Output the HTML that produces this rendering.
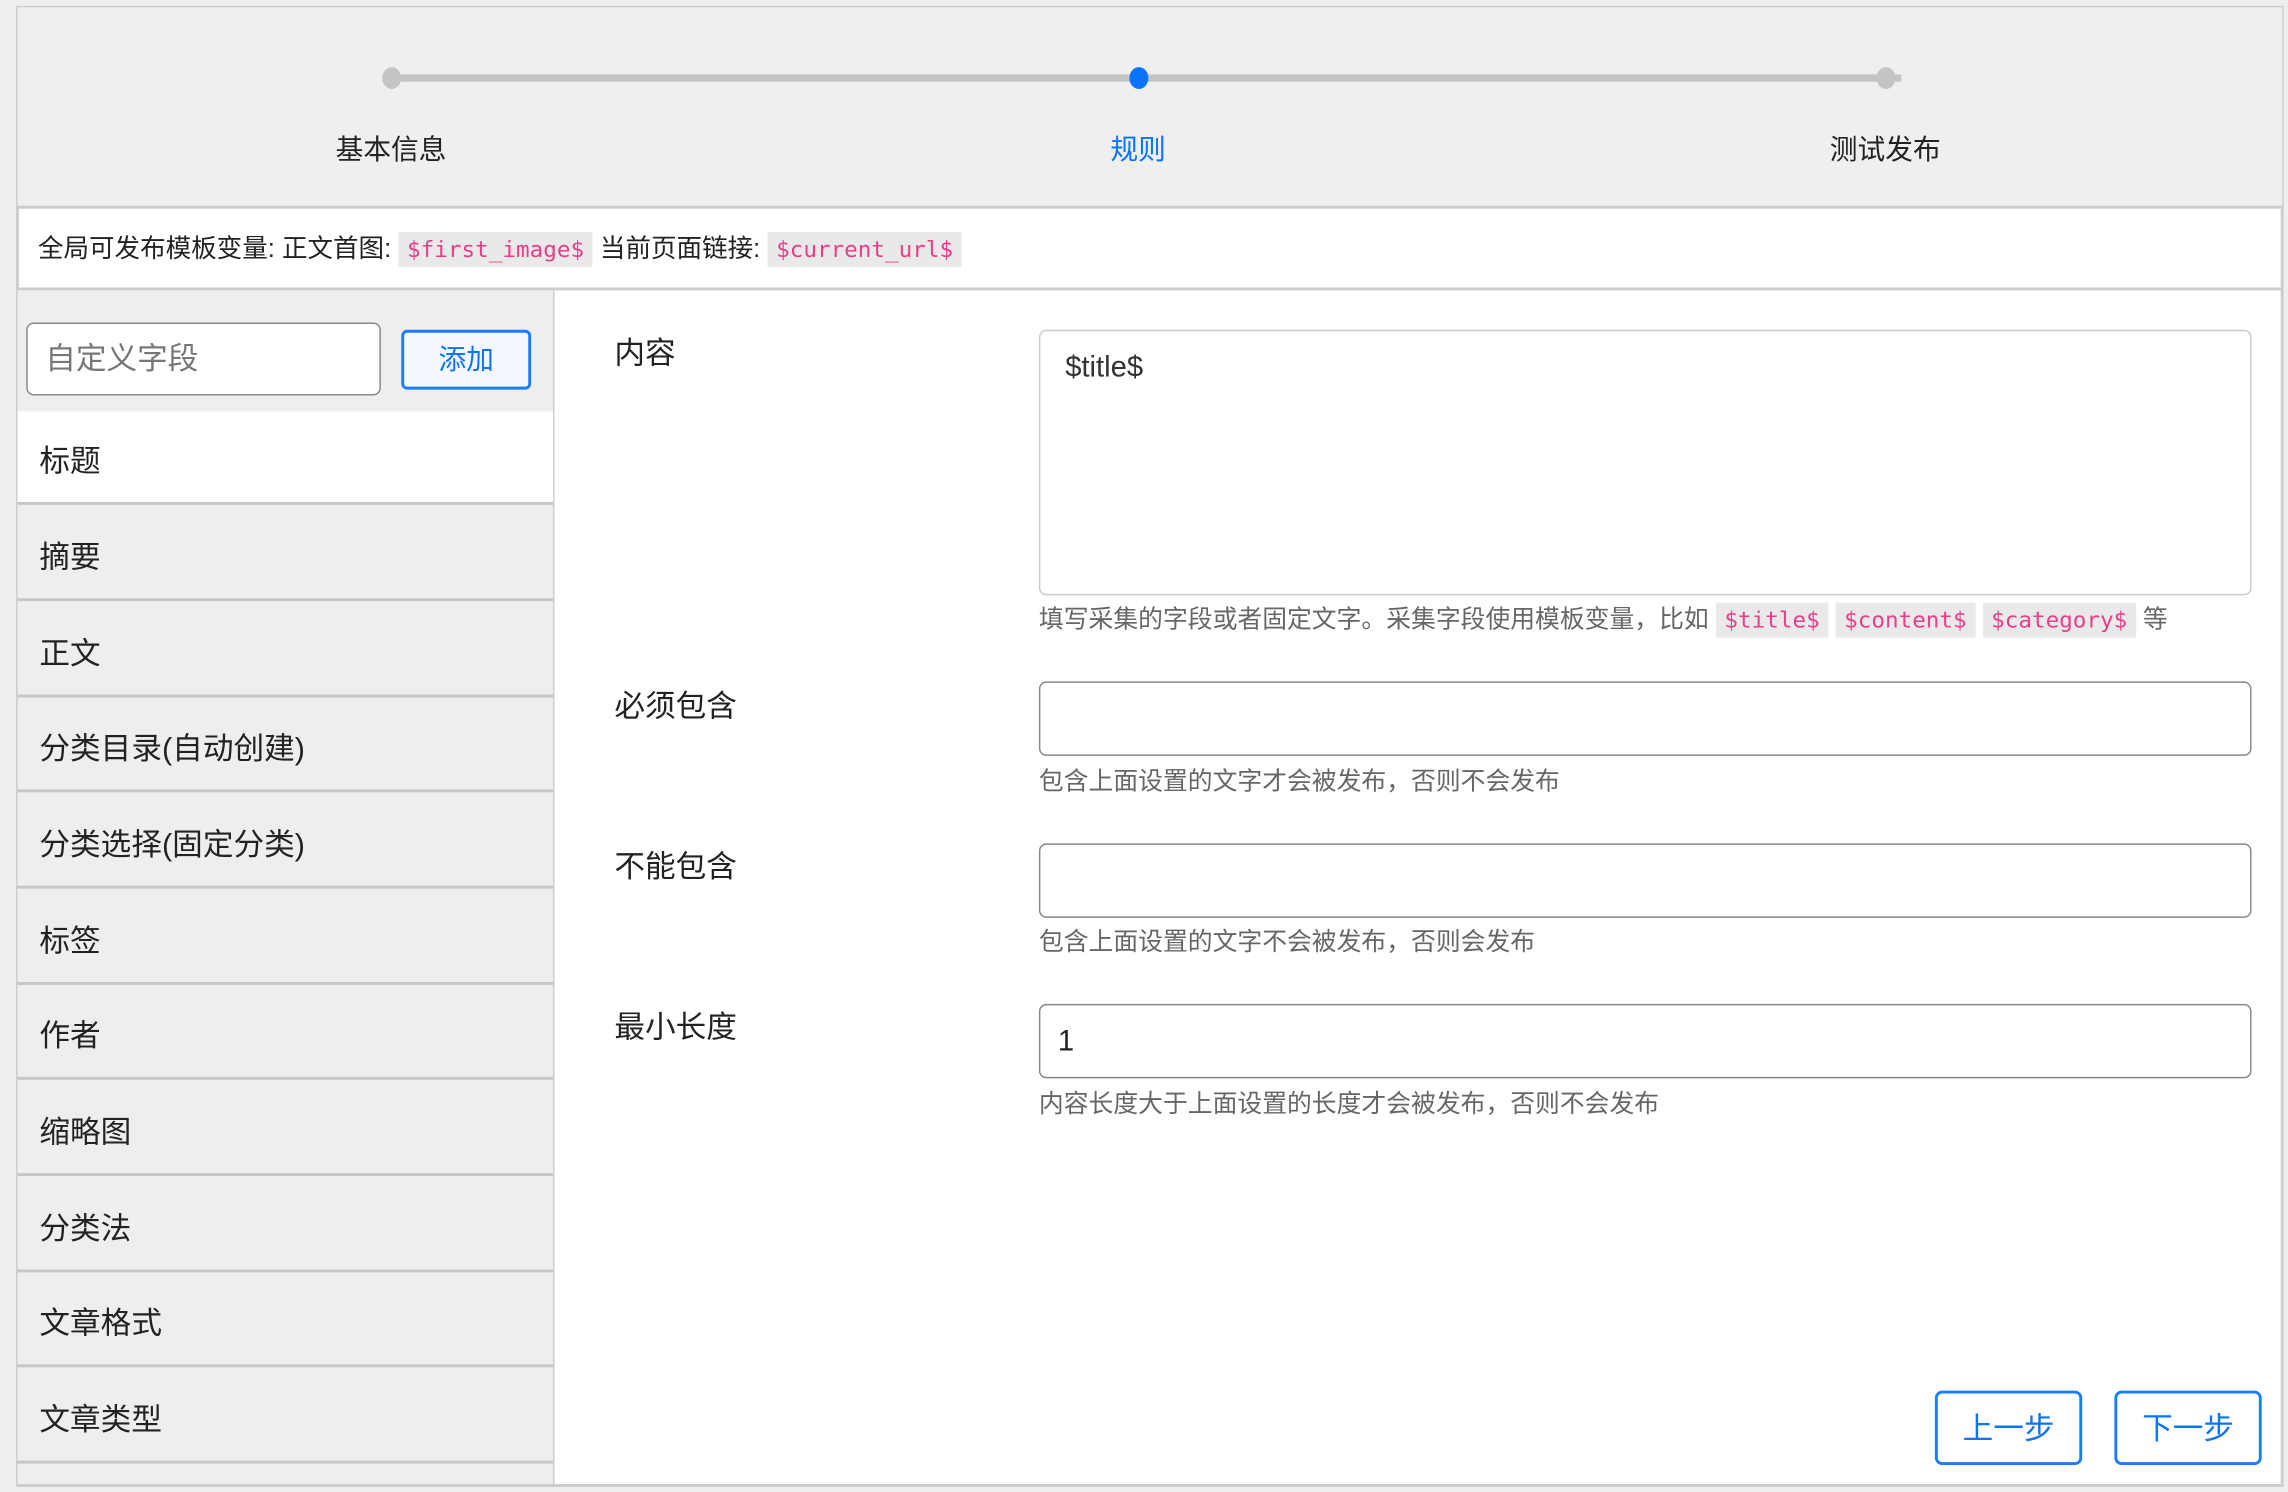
<!DOCTYPE html>
<html><head><meta charset="utf-8"><style>
html,body{margin:0;padding:0;width:2288px;height:1492px;overflow:hidden;background:#eee;}
#w{position:absolute;left:0;top:0;width:1568px;height:1022px;transform:scale(1.45918);transform-origin:0 0;font-family:"Liberation Sans","Noto Sans CJK SC",sans-serif;color:#222;}
.a{position:absolute;}
.code{font-family:"DejaVu Sans Mono","Liberation Mono",monospace;color:#e83e8c;background:#e9e9e9;padding:3px 6px;font-size:15.5px;}
.item{position:absolute;left:0;width:368px;height:64px;border-bottom:2px solid #c6c6c6;font-size:21px;line-height:70px;padding-left:15px;box-sizing:border-box;background:#eee;}
.lbl{position:absolute;left:421px;font-size:21px;line-height:24px;}
.inp{position:absolute;left:712px;width:831px;height:51px;border:1px solid #888;border-radius:5px;box-sizing:border-box;background:#fff;font-size:20px;padding-left:12px;line-height:51px;}
.help{position:absolute;left:712px;font-size:17px;color:#666;line-height:20px;}
.btn{position:absolute;top:953px;width:101px;height:51px;border:2px solid #1a7cff;border-radius:5px;box-sizing:border-box;color:#0b74ff;font-size:21px;text-align:center;line-height:49px;background:#fff;}
.dot{position:absolute;top:46px;width:13px;height:15px;border-radius:50%;background:#c4c4c4;}
</style></head><body><div id="w">
<div class="a" style="left:11px;top:4px;width:1554px;height:1015px;border:2px solid #ccc;box-sizing:border-box;background:#fff;"></div>
<div class="a" style="left:12px;top:5px;width:1552px;height:136px;background:#efefef;border-bottom:2px solid #ccc;"></div>
<div class="a" style="left:270px;top:51px;width:1033px;height:5px;background:#c4c4c4;"></div>
<div class="dot" style="left:262px;"></div>
<div class="dot" style="left:774px;background:#0a73ff;"></div>
<div class="dot" style="left:1286px;"></div>
<div class="a" style="left:230px;top:88px;font-size:19px;">基本信息</div>
<div class="a" style="left:761px;top:88px;font-size:19px;color:#0a73ff;">规则</div>
<div class="a" style="left:1254px;top:88px;font-size:19px;">测试发布</div>
<div class="a" style="left:26px;top:158px;font-size:17.5px;line-height:24px;white-space:nowrap;">全局可发布模板变量: 正文首图: <span class="code">$first_image$</span> 当前页面链接: <span class="code">$current_url$</span></div>
<div class="a" style="left:12px;top:197px;width:1552px;height:2px;background:#ccc;"></div>
<div class="a" style="left:12px;top:199px;width:367px;height:818px;background:#eee;border-right:1px solid #ccc;overflow:hidden;">
 <div class="a" style="left:6px;top:22px;width:243px;height:50px;border:1px solid #888;border-radius:5px;box-sizing:border-box;background:#fff;font-size:21px;color:#777;line-height:50px;padding-left:12px;">自定义字段</div>
 <div class="a" style="left:263px;top:27px;width:89px;height:41px;border:2px solid #1a7cff;border-radius:4px;box-sizing:border-box;color:#0b74ff;font-size:19px;text-align:center;line-height:39px;background:#f4f8ff;">添加</div>
 <div class="item" style="top:83px;background:#fff;">标题</div>
 <div class="item" style="top:149px;">摘要</div>
 <div class="item" style="top:215px;">正文</div>
 <div class="item" style="top:280px;">分类目录(自动创建)</div>
 <div class="item" style="top:346px;">分类选择(固定分类)</div>
 <div class="item" style="top:412px;">标签</div>
 <div class="item" style="top:477px;">作者</div>
 <div class="item" style="top:543px;">缩略图</div>
 <div class="item" style="top:609px;">分类法</div>
 <div class="item" style="top:674px;">文章格式</div>
 <div class="item" style="top:740px;">文章类型</div>
</div>
<div class="lbl" style="top:231px;">内容</div>
<div class="a" style="left:712px;top:226px;width:831px;height:182px;border:1px solid #c8ccd4;border-radius:5px;box-sizing:border-box;background:#fff;font-size:20px;padding:14px 17px;color:#333;">$title$</div>
<div class="help" style="top:415px;white-space:nowrap;">填写采集的字段或者固定文字。采集字段使用模板变量，比如 <span class="code">$title$</span> <span class="code">$content$</span> <span class="code">$category$</span> 等</div>
<div class="lbl" style="top:473px;">必须包含</div>
<div class="inp" style="top:467px;"></div>
<div class="help" style="top:526px;">包含上面设置的文字才会被发布，否则不会发布</div>
<div class="lbl" style="top:583px;">不能包含</div>
<div class="inp" style="top:578px;"></div>
<div class="help" style="top:636px;">包含上面设置的文字不会被发布，否则会发布</div>
<div class="lbl" style="top:693px;">最小长度</div>
<div class="inp" style="top:688px;">1</div>
<div class="help" style="top:747px;">内容长度大于上面设置的长度才会被发布，否则不会发布</div>
<div class="btn" style="left:1326px;">上一步</div>
<div class="btn" style="left:1449px;">下一步</div>
</div></body></html>
